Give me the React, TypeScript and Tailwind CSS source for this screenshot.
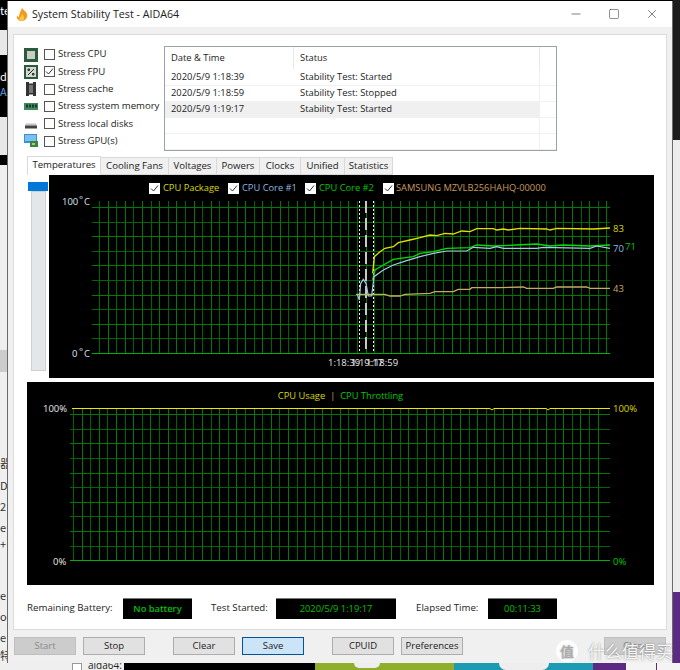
import { Minus, Square, X } from "lucide-react";

const rows = [
  ["2020/5/9 1:18:39", "Stability Test: Started"],
  ["2020/5/9 1:18:59", "Stability Test: Stopped"],
  ["2020/5/9 1:19:17", "Stability Test: Started"],
  ["", ""],
  ["", ""],
];

const tabs = [
  ["Temperatures", "w-[74px]"],
  ["Cooling Fans", "w-[68px]"],
  ["Voltages", "w-[48px]"],
  ["Powers", "w-[43px]"],
  ["Clocks", "w-[41px]"],
  ["Unified", "w-[44px]"],
  ["Statistics", "w-[48px]"],
];

// text of the window behind, cut off by the left edge of the dialog
const behindTop = [
  ["器", "h-[21px]"],
  ["D", "h-[22px]"],
  ["2", "h-[21px]"],
  ["e", "h-[20px]"],
  ["+", "h-[14px]"],
];
const behindBottom = [
  ["e", "h-[21px]"],
  ["o", "h-[21px]"],
  ["e", "h-[21px]"],
  ["特", "h-[15px]"],
];

// curve points are read off the 3x crop, so map them back to page pixels
const pts = (a: number[][]) => a.map(([x, y]) => `${330 + x / 3},${170 + y / 3}`).join(" ");

const yellow = [[128, 310], [133, 260], [150, 245], [165, 235], [190, 230], [205, 218], [240, 210], [270, 203], [300, 195], [320, 197], [345, 190], [370, 192], [395, 183], [420, 185], [440, 176], [490, 176], [500, 180], [520, 177], [535, 180], [570, 175], [650, 177], [660, 180], [680, 175], [790, 177], [840, 174]];
const green = [[128, 330], [135, 300], [160, 285], [190, 268], [250, 260], [270, 250], [310, 245], [350, 235], [420, 233], [440, 225], [490, 228], [560, 225], [620, 222], [660, 228], [700, 225], [780, 228], [840, 225]];
const blue = [[82, 373], [88, 390], [92, 340], [100, 328], [108, 340], [115, 378], [125, 378], [132, 320], [160, 300], [190, 285], [230, 272], [270, 260], [310, 250], [350, 243], [410, 243], [430, 232], [480, 235], [500, 230], [520, 235], [620, 235], [640, 232], [780, 235], [800, 228], [840, 235]];
const tan = [[78, 373], [165, 373], [180, 378], [210, 378], [225, 373], [300, 370], [315, 365], [370, 365], [385, 358], [420, 358], [425, 353], [510, 353], [580, 351], [590, 355], [670, 355], [680, 351], [770, 351], [780, 355], [840, 355]];

function Grid({ x0, xEnd, left, top, bottom, count, hs }: { x0: number; xEnd: number; left: number; top: number; bottom: number; count: number; hs: number[] }) {
  return (
    <g>
      {Array.from({ length: count }).map((_, i) => {
        const x = Math.round(x0 + i * 8.6) + 0.5;
        return <line key={i} x1={x} x2={x} y1={top} y2={bottom} stroke={i % 2 ? "#007a00" : "#006400"} />;
      })}
      {hs.map((y, i) => (
        <line key={y} x1={left} x2={xEnd} y1={y + 0.5} y2={y + 0.5} stroke={i === hs.length - 1 ? "#00b000" : i % 2 ? "#006400" : "#007a00"} />
      ))}
    </g>
  );
}

function StressIcon({ i }: { i: number }) {
  if (i === 0)
    return (
      <svg width="14" height="14" viewBox="0 0 14 14" className="shrink-0">
        <rect width="14" height="14" fill="#2c5b3c" />
        <rect x="3" y="3" width="8" height="8" fill="#c9cdc8" />
      </svg>
    );
  if (i === 1)
    return (
      <svg width="14" height="14" viewBox="0 0 14 14" className="shrink-0">
        <rect width="14" height="14" fill="#2c5b3c" />
        <rect x="2" y="2" width="10" height="10" fill="#d5d8d2" />
        <path d="M4 10 10 4M4 4h1.500v1.500H4zM8.500 8.500H10V10H8.500z" stroke="#222" fill="none" />
      </svg>
    );
  if (i === 2)
    return (
      <svg width="14" height="14" viewBox="0 0 14 14" className="shrink-0">
        <path d="M2 0h3v1.500h4V0h3v14H9v-1.500H5V14H2z" fill="#333" />
        <rect x="5" y="3" width="4" height="8" fill="#777" />
      </svg>
    );
  if (i === 3)
    return (
      <svg width="14" height="14" viewBox="0 0 14 14" className="shrink-0">
        <rect y="3" width="14" height="7" fill="#3d8a5c" />
        <path d="M2 4.500h2v3H2zM5 4.500h2v3H5zM8 4.500h2v3H8zM11 4.500h2v3h-2z" fill="#20352a" />
      </svg>
    );
  if (i === 4)
    return (
      <svg width="14" height="14" viewBox="0 0 14 14" className="shrink-0">
        <path d="M2 6.500h10l1 2H1z" fill="#c4c4c4" />
        <rect x="1" y="8.500" width="12" height="3" fill="#444" />
      </svg>
    );
  return (
    <svg width="14" height="14" viewBox="0 0 14 14" className="shrink-0">
      <rect width="13" height="9" fill="#3a8fd8" />
      <rect x="1" y="1" width="11" height="6" fill="#7cc0ee" />
      <rect x="6" y="7" width="8" height="6" fill="#2d8a4a" />
      <rect x="8" y="9" width="3" height="2" fill="#d8c040" />
    </svg>
  );
}

function Check({ checked, dark }: { checked?: boolean; dark?: boolean }) {
  return (
    <span className={`flex size-[11px] shrink-0 items-center justify-center bg-white ${dark ? "" : "border border-[#555]"}`}>
      {checked && (
        <svg width="9" height="9" viewBox="0 0 9 9">
          <path d="M1 4.500 3.500 7 8 1.500" fill="none" stroke="#333" strokeWidth="1" />
        </svg>
      )}
    </span>
  );
}

function Btn({ label, className }: { label: string; className: string }) {
  return <div className={`flex h-[18px] w-[62px] items-center justify-center border text-[9.5px] ${className}`}>{label}</div>;
}

const normal = "border-[#adadad] bg-[#e1e1e1] text-[#222]";
const disabled = "border-[#bfbfbf] bg-[#cccccc] text-[#8a8a8a]";

export default function App() {
  return (
    <div className="relative flex h-[670px] w-[680px] flex-col overflow-hidden bg-black font-['Open_Sans',sans-serif] text-[#222]">
      <div className="flex h-[663px]">
        {/* what shows of the desktop on the left */}
        <div className="flex w-[7px] shrink-0 flex-col overflow-hidden bg-[#efefef] font-['Noto_Sans_CJK_SC',sans-serif] text-[11px] leading-none text-[#333]">
          <div className="h-[30px] bg-black pt-[5px] text-white">te</div>
          <div className="h-[25px] bg-[#e8e8e8]" />
          <div className="h-[62px] bg-black pt-[16px] text-white">
            d
            <div className="mt-[4px] text-[#5aa0e0]">A</div>
          </div>
          <div className="h-[38px] bg-[#e8e8e8]" />
          <div className="h-[10px] bg-black" />
          <div className="h-[185px] bg-[#efefef]" />
          <div className="h-[22px] bg-[#cccccc]" />
          <div className="h-[81px]" />
          {behindTop.map(([t, h], i) => (
            <div key={i} className={`flex items-center ${h}`}>{t}</div>
          ))}
          <div className="h-[34px]" />
          {behindBottom.map(([t, h], i) => (
            <div key={i} className={`flex items-center ${h}`}>{t}</div>
          ))}
        </div>

        <div className="mt-px flex w-[666px] flex-col border-x border-[#6a6a6a] bg-[#f0f0f0]">
          <div className="flex h-[26px] shrink-0 items-center bg-white pl-[8px] pr-[13px]">
            <svg width="12" height="13" viewBox="0 0 12 13">
              <path d="M6 0c1 2 4 3 5 6 1 4-2 7-5 7S0 11 1 7c0 1 1 2 2 2 0-3 1-4 3-9z" fill="#f49a1c" />
              <path d="M6 6c1 1 2 2 2 4 0 1-1 3-2 3s-3-1-3-3c1 0 2-1 3-4z" fill="#f5c948" />
            </svg>
            <span className="ml-[4px] text-[10.7px]">System Stability Test - AIDA64</span>
            <div className="ml-auto flex items-center gap-[25px]">
              <Minus size={14} strokeWidth={1} />
              <Square size={12} strokeWidth={1} />
              <X size={14} strokeWidth={1} />
            </div>
          </div>

          <div className="mx-[5px] mt-[7px] flex h-[596px] shrink-0 flex-col border border-[#dcdcdc] bg-white pl-[10px] pt-[11px]">
            <div className="flex">
              <div className="flex w-[140px] flex-col">
                {["Stress CPU", "Stress FPU", "Stress cache", "Stress system memory", "Stress local disks", "Stress GPU(s)"].map((t, i) => (
                  <div key={t} className="flex h-[17.3px] items-center text-[9.6px]">
                    <StressIcon i={i} />
                    <span className="ml-[6px]">
                      <Check checked={i === 1} />
                    </span>
                    <span className="ml-[3px] whitespace-nowrap">{t}</span>
                  </div>
                ))}
              </div>
              <div className="h-[105px] w-[393px] border border-[#9aa3ab] text-[9.4px]">
                <div className="flex h-[22.500px] items-center">
                  <span className="w-[129px] border-r border-[#e8e8e8] pl-[6px] leading-[22px]">Date &amp; Time</span>
                  <span className="w-[246px] border-r border-[#e8e8e8] pl-[6px] leading-[22px]">Status</span>
                </div>
                {rows.map((r, i) => (
                  <div key={i} className={`flex h-[16.200px] items-center border-b border-[#f0f0f0] ${i === 2 ? "bg-[linear-gradient(to_right,#f0f0f0_375px,white_375px)]" : ""}`}>
                    <span className="w-[129px] pl-[6px]">{r[0]}</span>
                    <span className="w-[246px] border-r border-[#f0f0f0] pl-[6px] leading-[16px]">{r[1] || "\u00a0"}</span>
                  </div>
                ))}
              </div>
            </div>

            <div className="ml-[3px] mt-[5px] flex h-[19px] items-end text-[9.6px]">
              {tabs.map(([t, w], i) => (
                <div key={t} className={`flex items-center justify-center border border-[#d9d9d9] ${w} ${i === 0 ? "h-[19px] border-b-0 bg-white pb-[2px]" : "h-[18px] border-l-0 bg-[#f0f0f0]"}`}>
                  {t}
                </div>
              ))}
            </div>

            <div className="ml-[4px] flex">
              <div className="mt-[7px] flex w-[21px] flex-col">
                <div className="h-[9px] w-[20px] bg-[#0078d7]" />
                <div className="ml-[3px] h-[180px] w-[15px] border border-[#cfcfcf] bg-[#e4e7e9]" />
              </div>
              <div className="flex h-[203px] w-[605px] flex-col bg-black">
                <div className="flex h-[20px] items-center pl-[100px] pt-[6px] text-[9.3px]">
                  <Check checked dark />
                  <span className="ml-[3px] w-[65px] whitespace-nowrap text-[#d8d800]">CPU Package</span>
                  <Check checked dark />
                  <span className="ml-[3px] w-[63px] whitespace-nowrap text-[#8fb8e0]">CPU Core #1</span>
                  <Check checked dark />
                  <span className="ml-[3px] w-[64px] whitespace-nowrap text-[#00c800]">CPU Core #2</span>
                  <Check checked dark />
                  <span className="ml-[2px] whitespace-nowrap text-[#c8995a]">SAMSUNG MZVLB256HAHQ-00000</span>
                </div>
                <svg width="605" height="183" viewBox="49 195 605 183" className="block">
                  <Grid x0={99} xEnd={610} left={92} top={201} bottom={353} count={60} hs={[207, 222, 236, 251, 265, 280, 295, 309, 324, 338, 353]} />
                  <g stroke="#fff" strokeDasharray="2 2">
                    <line x1="359.500" x2="359.500" y1="201" y2="353" />
                    <line x1="373.500" x2="373.500" y1="201" y2="353" />
                  </g>
                  <line x1="366" x2="366" y1="201" y2="353" stroke="#c8c8c8" strokeWidth="2" strokeDasharray="12 5" />
                  <polyline points={pts(tan)} fill="none" stroke="#c8a96a" strokeWidth="1.300" />
                  <polyline points={pts(yellow)} fill="none" stroke="#e0e000" strokeWidth="1.300" />
                  <polyline points={pts(green)} fill="none" stroke="#00e000" strokeWidth="1.300" />
                  <polyline points={pts(blue)} fill="none" stroke="#a8c8e8" strokeWidth="1.200" />
                  <g fontSize="9.5" fontFamily="Open Sans, sans-serif">
                    <text x="62" y="205" fill="#d8e4f0">100</text>
                    <text x="79" y="203" fill="#d8e4f0">°</text>
                    <text x="84" y="205" fill="#d8e4f0">C</text>
                    <text x="72" y="357" fill="#d8e4f0">0</text>
                    <text x="79" y="355" fill="#d8e4f0">°</text>
                    <text x="84" y="357" fill="#d8e4f0">C</text>
                    <text x="328" y="366" fill="#e8e8e8">1:18:39</text>
                    <text x="351" y="366" fill="#e8e8e8">1:19:17</text>
                    <text x="366" y="366" fill="#e8e8e8">1:18:59</text>
                    <text x="613" y="232" fill="#d8d800">83</text>
                    <text x="613" y="252" fill="#8fb8e0">70</text>
                    <text x="625" y="250" fill="#00c800">71</text>
                    <text x="613" y="292" fill="#c8a96a">43</text>
                  </g>
                </svg>
              </div>
            </div>

            <div className="ml-[3px] mt-[4px] flex h-[203px] w-[627px] flex-col bg-black">
              <div className="flex h-[21px] items-center justify-center pt-[6px] text-[9.3px]">
                <span className="text-[#d8d800]">CPU Usage</span>
                <span className="mx-[5px] text-[#c8a96a]">|</span>
                <span className="text-[#00c800]">CPU Throttling</span>
              </div>
              <svg width="627" height="182" viewBox="27 403 627 182" className="block">
                <Grid x0={73} xEnd={610} left={70} top={408} bottom={561} count={62} hs={[414, 429, 443, 458, 473, 487, 502, 516, 531, 546, 560]} />
                <polyline points="72,408.500 490,408.500 492,410 494,408.500 546,408.500 548,410 550,408.500 610,408.500" fill="none" stroke="#e8e800" />
                <g fontSize="9.5" fontFamily="Open Sans, sans-serif">
                  <text x="43" y="412" fill="#e8e8e8">100%</text>
                  <text x="53" y="565" fill="#e8e8e8">0%</text>
                  <text x="613" y="412" fill="#d8d800">100%</text>
                  <text x="613" y="565" fill="#00c800">0%</text>
                </g>
              </svg>
            </div>

            <div className="ml-[3px] mt-[13px] flex h-[21px] items-center text-[9.7px]">
              <span className="w-[96px] whitespace-nowrap">Remaining Battery:</span>
              <div className="flex h-[21px] w-[69px] items-center justify-center border-t border-[#777] bg-black text-[9.3px] font-semibold text-[#00c000]">No battery</div>
              <span className="ml-[19px] w-[65px] whitespace-nowrap">Test Started:</span>
              <div className="flex h-[21px] w-[120px] items-center justify-center border-t border-[#777] bg-black text-[9.3px] text-[#00c000]">2020/5/9 1:19:17</div>
              <span className="ml-[20px] w-[72px] whitespace-nowrap">Elapsed Time:</span>
              <div className="flex h-[21px] w-[69px] items-center justify-center border-t border-[#777] bg-black text-[9.3px] text-[#00c000]">00:11:33</div>
            </div>
          </div>

          <div className="flex pl-[6px] pr-[6px] pt-[7px]">
            <Btn label="Start" className={disabled} />
            <Btn label="Stop" className={`ml-[7px] ${normal}`} />
            <Btn label="Clear" className={`ml-[28px] ${normal}`} />
            <Btn label="Save" className="ml-[7px] border-[#005499] bg-[#cce4f7] text-[#222]" />
            <Btn label="CPUID" className={`ml-[28px] ${normal}`} />
            <Btn label="Preferences" className={`ml-[7px] ${normal}`} />
            <Btn label="Close" className={`ml-auto ${disabled}`} />
          </div>
        </div>

        {/* desktop on the right */}
        <div className="flex w-[7px] shrink-0 flex-col">
          <div className="h-[140px] bg-[#1c1c1c]" />
          <div className="h-[452px] bg-[#ececec]" />
          <div className="flex-1 bg-[#5b2a82]" />
        </div>
      </div>

      {/* desktop below the window */}
      <div className="flex h-[7px] overflow-hidden">
        <div className="flex w-[124px] items-start bg-[#efefef] pl-[72px] text-[10px] leading-none">
          <span className="size-[10px] shrink-0 border border-[#999] bg-white" />
          <span className="ml-[6px] -mt-[3px]">aida64:</span>
        </div>
        <div className="w-[191px] bg-black pl-[24px] text-[30px] font-bold leading-[40px] text-white">AIDA64</div>
        <div className="flex w-[139px] justify-center bg-[#8fae2a] pr-[36px]">
          <div className="h-[5px] w-[26px] rounded-b-md bg-[#eeeeee]" />
        </div>
        <div className="flex w-[139px] justify-center bg-[#1d9bb3]">
          <div className="h-[7px] w-[50px] rounded-b-xl bg-[#eeeeee]" />
        </div>
        <div className="w-[33px] bg-[#5b2a82]" />
        <div className="flex-1 bg-[#f4f4f4] pl-[30px]">
          <div className="h-full w-px bg-[#5b2a82]" />
        </div>
      </div>

      {/* site watermark */}
      <div className="pointer-events-none absolute left-[556px] top-[640px] flex items-center font-['Noto_Sans_CJK_SC',sans-serif] text-white/90 [text-shadow:0_0_2px_#777]">
        <span className="flex size-[22px] items-center justify-center rounded-full bg-white/90 text-[14px] text-[#aaa]">值</span>
        <span className="ml-[10px] whitespace-nowrap text-[17px] leading-[22px]">什么值得买</span>
      </div>
    </div>
  );
}
